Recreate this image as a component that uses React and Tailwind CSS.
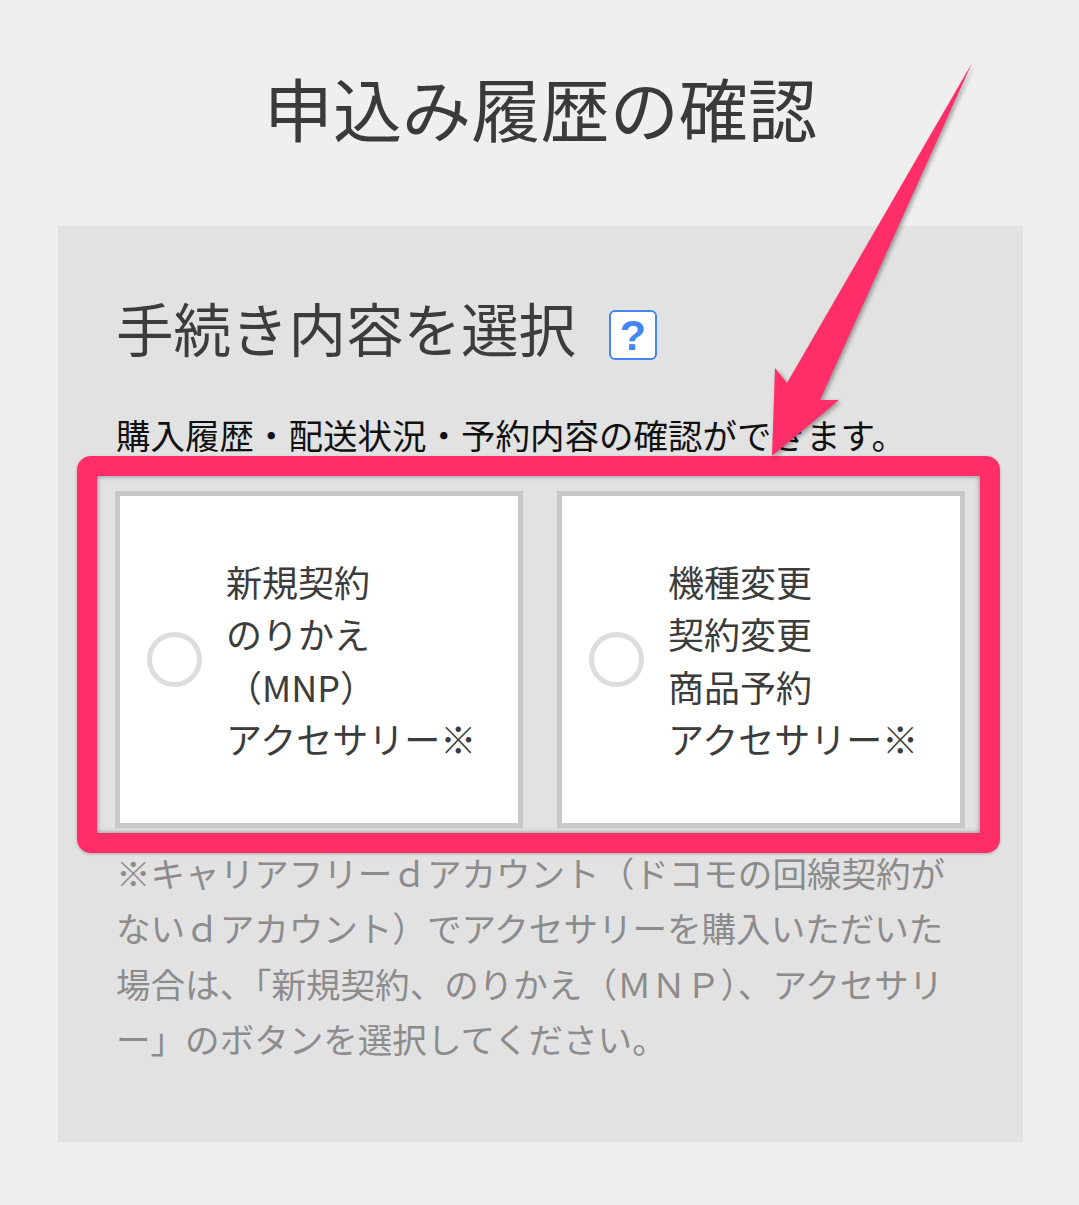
const jp = "font-['Noto_Sans_CJK_JP','Noto_Sans',sans-serif]"

function Choice({ lines }) {
  return (
    <div className="flex h-[337px] w-[408px] items-center border-[5px] border-[#c8c8c8] bg-white pl-[27px]">
      <span className="h-[55px] w-[55px] shrink-0 rounded-full border-[5px] border-[#dddddd]" />
      <div className="ml-[24px] whitespace-nowrap text-[36px] leading-[52.3px] text-[#3c3c3c]">
        {lines.map((l) => (
          <div key={l}>{l}</div>
        ))}
      </div>
    </div>
  )
}

export default function App() {
  return (
    <div className={`relative h-[1205px] w-[1079px] overflow-hidden bg-[#efefef] ${jp}`}>
      <h1 className="flex h-[226px] items-start justify-center pl-[2px] pt-[57px] text-[69.2px] font-normal leading-[100px] text-[#3a3a3a]">
        申込み履歴の確認
      </h1>

      <section className="ml-[58px] h-[916px] w-[965px] bg-[#e2e2e2] px-[57px] pt-[59px]">
        <div className="flex h-[84px] items-center">
          <h2 className="ml-px whitespace-nowrap text-[57.5px] font-normal leading-[84px] text-[#3c3c3c]">手続き内容を選択</h2>
          <span className="ml-[33px] mt-[16px] flex h-[50px] w-[48px] items-center justify-center rounded-[6px] border-2 border-[#4287f5] bg-white font-['Liberation_Sans',sans-serif] text-[43px] font-bold leading-none text-[#4287f5]">
            ?
          </span>
        </div>

        <p className="ml-px mt-[40px] h-[50px] whitespace-nowrap text-[34.5px] leading-[50px] text-[#111111]">
          購入履歴・配送状況・予約内容の確認ができます。
        </p>

        <div className="mt-[32px] flex gap-[34px]">
          <Choice lines={['新規契約', 'のりかえ', '（MNP）', 'アクセサリー※']} />
          <Choice lines={['機種変更', '契約変更', '商品予約', 'アクセサリー※']} />
        </div>

        <div className="ml-px mt-[17px] whitespace-nowrap text-[34.55px] leading-[55.3px] text-[#8c8c8c]">
          <div>※キャリアフリーｄアカウント（ドコモの回線契約が</div>
          <div>ないｄアカウント）でアクセサリーを購入いただいた</div>
          <div>場合は、「新規契約、のりかえ（ＭＮＰ）、アクセサリ</div>
          <div>ー」のボタンを選択してください。</div>
        </div>
      </section>

      {/* annotation over the screenshot */}
      <div className="absolute left-[77px] top-[456px] h-[397px] w-[923px] rounded-[14px] border-[20px] border-[#ff2d68] shadow-[0_1px_3px_rgba(0,0,0,0.25),inset_0_0_5px_rgba(0,0,0,0.45)]" />
      <svg className="absolute left-0 top-0 drop-shadow-[2px_2px_2px_rgba(0,0,0,0.35)]" width="1079" height="480" viewBox="0 0 1079 480">
        <polygon points="972,63 787,383 775,368 772,456 839,400 820,400" fill="#ff2d68" />
      </svg>
    </div>
  )
}
